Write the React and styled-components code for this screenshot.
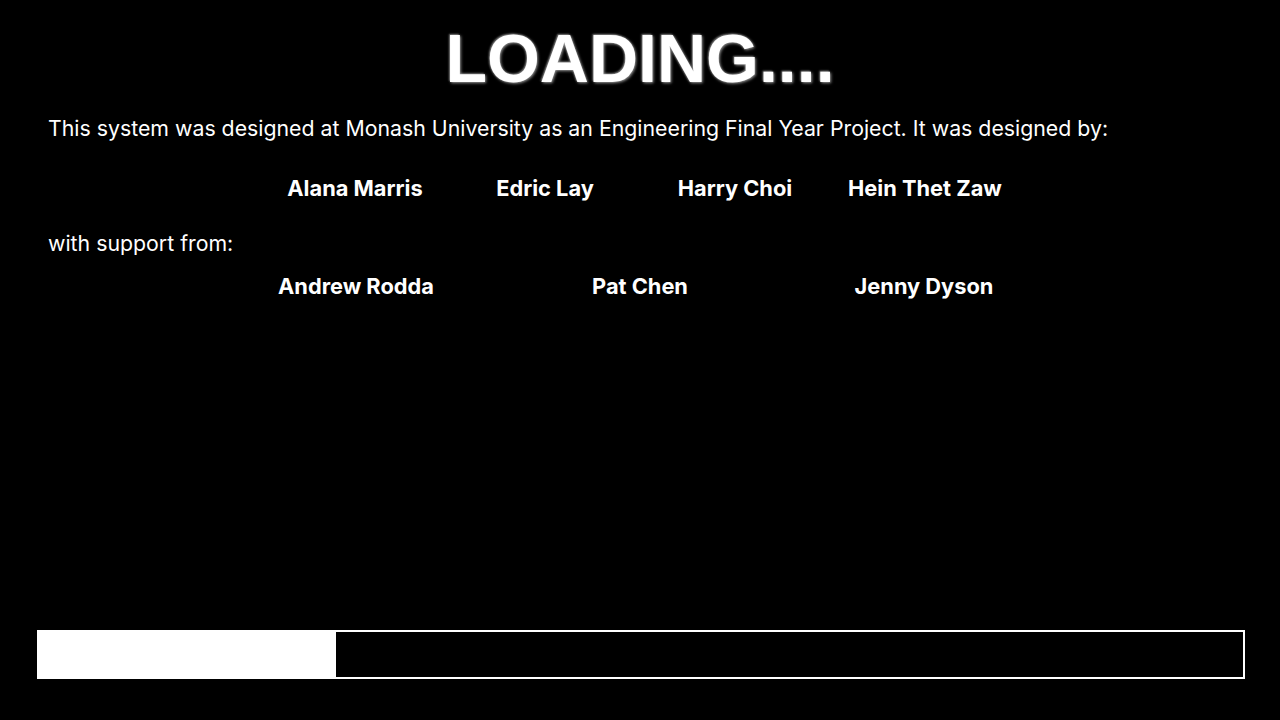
import React from "react";
import styled, { createGlobalStyle } from "styled-components";

const Global = createGlobalStyle`
  html, body { margin: 0; padding: 0; background: #000; }
  body { font-family: Inter, "Noto Sans", sans-serif; color: #fff; }
`;

const Page = styled.div`
  width: 1280px;
  height: 720px;
  box-sizing: border-box;
  display: flex;
  flex-direction: column;
  padding: 0 0 41px;
  background: #000;
  overflow: hidden;
`;

const Title = styled.h1`
  margin: 18px 0 0;
  height: 80px;
  line-height: 80px;
  text-align: center;
  font-family: "Liberation Sans", Arial, sans-serif;
  font-weight: 700;
  font-size: 68px;
  color: #fff;
  text-shadow: 1px 1px 3px #9a9a9a, -1px -1px 2px #777;
`;

const Para = styled.p`
  margin: ${(p) => p.$mt || 0}px 0 0 48px;
  font-size: 21.3px;
  line-height: 28px;
  font-weight: 400;
`;

const NameRow = styled.div`
  display: grid;
  grid-template-columns: repeat(${(p) => p.$cols}, ${(p) => p.$w}px);
  justify-content: center;
  margin-top: ${(p) => p.$mt}px;
`;

const Name = styled.span`
  text-align: center;
  font-size: 21.8px;
  line-height: 28px;
  font-weight: 700;
`;

const Bar = styled.div`
  margin: auto 35px 0 37px;
  height: 49px;
  box-sizing: border-box;
  border: 2px solid #fff;
  display: flex;
`;

const Fill = styled.div`
  background: #fff;
  height: 100%;
`;

export default function App() {
  const progress = 297;
  return (
    <>
      <Global />
      <Page>
        <Title>LOADING....</Title>
        <Para $mt={16}>
          This system was designed at Monash University as an Engineering Final Year Project. It was designed by:
        </Para>
        <NameRow $cols={4} $w={190} $mt={32}>
          <Name>Alana Marris</Name>
          <Name>Edric Lay</Name>
          <Name>Harry Choi</Name>
          <Name>Hein Thet Zaw</Name>
        </NameRow>
        <Para $mt={27}>with support from:</Para>
        <NameRow $cols={3} $w={284} $mt={15}>
          <Name>Andrew Rodda</Name>
          <Name>Pat Chen</Name>
          <Name>Jenny Dyson</Name>
        </NameRow>
        <Bar>
          <Fill style={{ width: progress }} />
        </Bar>
      </Page>
    </>
  );
}
